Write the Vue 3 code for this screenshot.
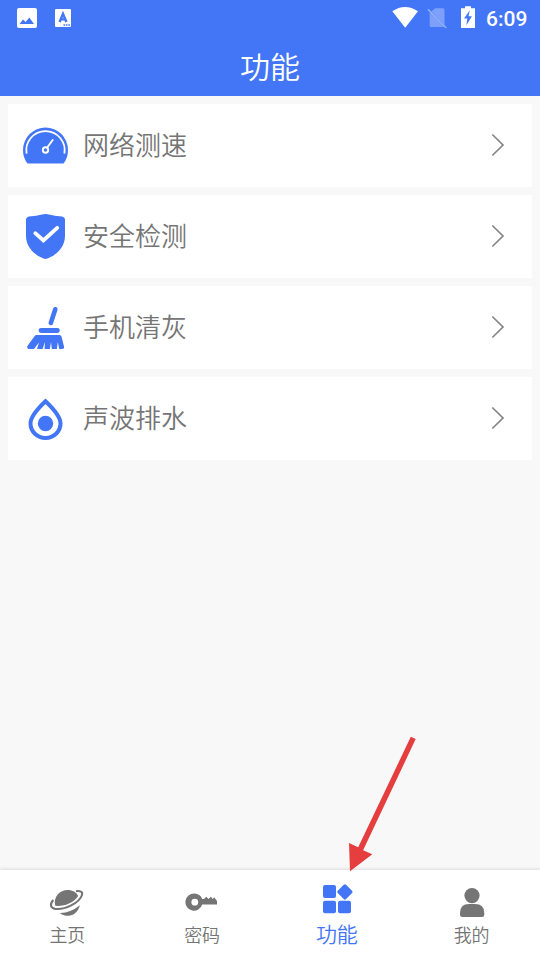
<script setup>
const rows = [
  { id: 'speed', label: '网络测速' },
  { id: 'shield', label: '安全检测' },
  { id: 'broom', label: '手机清灰' },
  { id: 'drop', label: '声波排水' }
]
const tabs = [
  { id: 'home', label: '主页' },
  { id: 'key', label: '密码' },
  { id: 'apps', label: '功能', active: true },
  { id: 'user', label: '我的' }
]
</script>

<template>
  <div class="screen">
    <div class="status">
      <div class="status-left">
        <svg width="20" height="20" viewBox="0 0 20 20">
          <path fill="#fff" fill-rule="evenodd" d="M2 0H18Q20 0 20 2V18Q20 20 18 20H2Q0 20 0 18V2Q0 0 2 0ZM2.5 16H17L12.3 9.5L8.6 14L6 11.5Z" />
        </svg>
        <svg width="16" height="18" viewBox="0 0 16 18">
          <rect width="16" height="18" rx="1" fill="#fff" />
          <path d="M4.6 13L8 4.8L11.4 13M6 10.4H10" fill="none" stroke="#4376f6" stroke-width="2.4" />
          <path d="M8.5 16H15" stroke="#4376f6" stroke-width="1.4" stroke-dasharray="1.6 .8" />
        </svg>
      </div>
      <div class="status-right">
        <svg width="92" height="24" viewBox="0 0 92 24">
          <path d="M.3 5.3Q13 -3.3 26 5.3L13.2 21.7Z" fill="#fff" />
          <path d="M43 2.2H51Q52.5 2.2 52.5 3.7V19L39.5 5.5ZM37.7 7L51 21H39.2Q37.7 21 37.7 19.5Z" fill="#7da0fa" />
          <path d="M38.5 5.5L52 19.5V21H50L37.7 8Z" fill="#7da0fa" />
          <path d="M36 3.4L54.3 22" stroke="#8eadfb" stroke-width="1.5" />
          <path d="M69 2.2H73V.2H79V2.2H83V22H69Z" fill="#fff" />
          <path d="M77.8 4.2L72 12.4H75.3L74.4 19.2L79.9 10.2H76.5Z" fill="#4376f6" />
        </svg>
        <span class="time">6:09</span>
      </div>
    </div>
    <header class="title">功能</header>

    <main class="list">
      <div v-for="r in rows" :key="r.id" class="row">
        <svg class="row-icon" width="48" height="47" viewBox="0 0 48 47">
          <g v-if="r.id === 'speed'">
            <path d="M6.5 41.5Q2 36 2 28A22.5 22.5 0 0 1 47 28Q47 36 42.5 41.5Z" fill="#4376f6" />
            <path d="M5.6 31.7A19.2 19.2 0 1 1 43.4 31.7" fill="none" stroke="#fff" stroke-width="1.8" />
            <circle cx="24.5" cy="28" r="2.7" fill="none" stroke="#fff" stroke-width="1.9" />
            <path d="M26.2 25.5L31.7 18" stroke="#fff" stroke-width="1.9" stroke-linecap="round" />
          </g>
          <g v-else-if="r.id === 'shield'">
            <path d="M8 3.5Q16 3 21 1.5Q24.5 .5 28 1.5Q33 3 41 3.5Q44 4 44 7V23C44 35 34 43.5 24.5 46C15 43.5 5 35 5 23V7Q5 4 8 3.5Z" fill="#4376f6" />
            <path d="M14.3 20.2L22.4 27.5L36.2 14.8" fill="none" stroke="#fff" stroke-width="3.8" stroke-linecap="round" />
          </g>
          <g v-else-if="r.id === 'broom'" fill="#4376f6">
            <path d="M34.3 5.3L29.8 19" stroke="#4376f6" stroke-width="4.6" stroke-linecap="round" />
            <rect x="17.6" y="24" width="21.2" height="4.9" rx="2.4" />
            <path d="M15.5 31H38.5Q40 31 40.5 32.5L43 42.5Q43.5 45 41 45H38.2L36.8 38L35.9 45H30.8L30 38L28.9 45H23.6L24 38L21.6 45H16L18 38.5L13 45H7.5Q5.2 43.5 6.8 41.5L13.5 32.2Q14.3 31 15.5 31Z" />
          </g>
          <g v-else>
            <path d="M24.5 6.3Q9.5 20.5 9.5 28.5A15 14.5 0 0 0 39.5 28.5Q39.5 20.5 24.5 6.3Z" fill="none" stroke="#4376f6" stroke-width="4" />
            <circle cx="24.5" cy="28.5" r="7.7" fill="#4376f6" />
          </g>
        </svg>
        <span class="row-label">{{ r.label }}</span>
        <svg class="chevron" width="14" height="24" viewBox="0 0 14 24">
          <path d="M1.3 1.5L12 12L1.3 22.5" fill="none" stroke="#858585" stroke-width="1.7" />
        </svg>
      </div>
    </main>

    <nav class="tabs">
      <div v-for="t in tabs" :key="t.id" class="tab" :class="{ active: t.active }">
        <svg width="36" height="36" viewBox="0 0 36 36">
          <g v-if="t.id === 'home'">
            <path d="M6.2 21.8C4 12.5 11 6 18.5 6C23.5 6 27.5 8.3 29.2 12C24.5 19 15 22.7 6.2 21.8Z" fill="#757575" />
            <path d="M10.8 28.9Q21 29.2 31 21.3C29 28 24.5 31.7 19.3 31.7Q14 31.7 10.8 28.9Z" fill="#757575" />
            <path d="M4.3 16C.4 20.3 1.3 24.2 6.5 24.9C15.5 26 30.5 19 33 11C34 7.8 31.2 6.7 27 7.2" fill="none" stroke="#757575" stroke-width="2" />
          </g>
          <g v-else-if="t.id === 'key'" fill="#757575">
            <path fill-rule="evenodd" d="M10.5 9.6A8.6 8.6 0 0 1 18.2 15H20L22.3 12.8L24.5 15L26.8 12.8L28.8 15L30.2 13.2L33 17V20.6H18.2A8.6 8.6 0 1 1 10.5 9.6ZM10.8 14.8A3.4 3.4 0 1 0 10.8 21.6A3.4 3.4 0 1 0 10.8 14.8Z" />
          </g>
          <g v-else-if="t.id === 'apps'" fill="#4376f6">
            <rect x="4" y="2" width="13" height="13" rx="2" />
            <rect x="4" y="17.8" width="13" height="12.5" rx="2" />
            <rect x="19" y="17.8" width="13" height="12.5" rx="2" />
            <rect x="20" y="3" width="11.8" height="11.8" rx="1.7" transform="rotate(45 25.9 8.9)" />
          </g>
          <g v-else fill="#757575">
            <circle cx="18" cy="11.6" r="7.6" />
            <path d="M6 30.5V29Q6 20 15 20H21Q30.3 20 30.3 29V30.5Q30.3 33 28 33H8.3Q6 33 6 30.5Z" />
          </g>
        </svg>
        <span class="tab-label">{{ t.label }}</span>
      </div>
    </nav>

    <svg class="arrow" width="72" height="136" viewBox="0 0 72 136">
      <path d="M65.8 .8L70.7 3.1L18.1 114.2L27.3 118.3L5 135.2L4 107L13.2 111.3Z" fill="#e53e3e" />
    </svg>
  </div>
</template>

<style>
body {
  margin: 0;
}
</style>

<style scoped>
.screen {
  position: relative;
  width: 540px;
  height: 960px;
  display: flex;
  flex-direction: column;
  overflow: hidden;
  background: #f8f8f8;
  color: #757575;
  font-family: "Noto Sans CJK SC", sans-serif;
  font-weight: 350;
}
.status {
  height: 36px;
  flex: none;
  box-sizing: border-box;
  padding: 0 12px 0 17px;
  display: flex;
  align-items: center;
  justify-content: space-between;
  background: #4376f6;
}
.status-left,
.status-right {
  display: flex;
  align-items: center;
}
.status-left {
  gap: 18px;
}
.time {
  width: 42px;
  margin-left: 2px;
  padding-top: 2px;
  color: #fff;
  font: 500 21px/24px Roboto, sans-serif;
  white-space: nowrap;
}
.title {
  height: 60px;
  flex: none;
  box-sizing: border-box;
  background: #4376f6;
  color: #fff;
  font-size: 30px;
  line-height: 58px;
  text-align: center;
}
.list {
  flex: 1;
  padding: 8px;
  display: flex;
  flex-direction: column;
  gap: 8px;
}
.row {
  height: 83px;
  box-sizing: border-box;
  padding: 0 27px 0 13px;
  display: flex;
  align-items: center;
  background: #fff;
}
.row-label {
  flex: 1;
  margin-left: 14px;
  padding-bottom: 4px;
  font-size: 26px;
  line-height: 40px;
}
.chevron {
  margin-bottom: 2px;
}
.tabs {
  height: 90px;
  flex: none;
  box-sizing: border-box;
  padding-right: 1px;
  display: flex;
  background: #fff;
  box-shadow: 0 -1px 3px rgba(0, 0, 0, 0.12);
}
.tab {
  flex: 1;
  padding-top: 14px;
  display: flex;
  flex-direction: column;
  align-items: center;
}
.active {
  padding-top: 13px;
}
.tab-label {
  font-size: 18px;
  line-height: 28px;
}
.active .tab-label {
  color: #4376f6;
  font-size: 21px;
}
.arrow {
  position: absolute;
  left: 345px;
  top: 736px;
}
</style>
